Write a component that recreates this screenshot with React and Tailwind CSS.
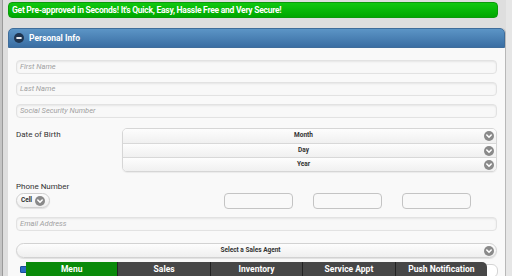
import { useState } from 'react';

function Chevron() {
    return (
        <svg width="10" height="10" viewBox="0 0 10 10" className="shrink-0">
            <circle cx="5" cy="5" r="5" fill="#8a8a8a" />
            <path d="M2.8 4 L5 6.2 L7.2 4" stroke="#fff" strokeWidth="1.6" fill="none" strokeLinecap="round" />
        </svg>
    );
}

function TextInput({ placeholder }) {
    return (
        <div className="h-[14px] rounded-[4px] border border-[#e2e2e2] bg-[#f8f8f8] shadow-[inset_0_1px_2px_rgba(0,0,0,0.08)] flex items-center px-[3px]">
            <span className="text-[7.5px] italic text-[#a0a0a0]">{placeholder}</span>
        </div>
    );
}

export default function App() {
    const [tab, setTab] = useState('Menu');
    const tabs = ['Menu', 'Sales', 'Inventory', 'Service Appt', 'Push Notification'];

    return (
        <div className="w-[512px] h-[276px] overflow-hidden bg-[#dedede] relative font-['Roboto',sans-serif] flex">
            {/* left edge */}
            <div className="w-[3px] bg-[#c4c4c4] border-r border-[#9a9a9a] shrink-0" />

            <div className="flex-1 pl-[5px] pr-[6px] pt-[2px] flex flex-col">
                {/* Banner */}
                <div className="h-[16px] w-[490px] rounded-[4px] bg-gradient-to-b from-[#10c810] to-[#00a800] border border-[#0a9a0a] flex items-center pl-[3px]">
                    <span className="text-[8.5px] font-bold text-white tracking-[-0.25px]">
                        Get Pre-approved in Seconds! It's Quick, Easy, Hassle Free and Very Secure!
                    </span>
                </div>

                {/* Panel */}
                <div className="mt-[10px] flex-1 flex flex-col rounded-t-[5px] border-r border-[#b8b8b8]">
                    <div className="h-[20px] rounded-t-[5px] bg-gradient-to-b from-[#5c95c6] to-[#3a6ea3] border border-[#3f6d9b] flex items-center pl-[5px] gap-[5px]">
                        <svg width="10" height="10" viewBox="0 0 10 10">
                            <circle cx="5" cy="5" r="5" fill="#1f3550" />
                            <rect x="2.4" y="4.1" width="5.2" height="1.8" fill="#fff" />
                        </svg>
                        <span className="text-[8.5px] font-bold text-white">Personal Info</span>
                    </div>

                    <div className="flex-1 bg-[#f9f9f9] pl-[8px] pr-[8px] pt-[12px] flex flex-col">
                        <div className="flex flex-col gap-[8px]">
                            <TextInput placeholder="First Name" />
                            <TextInput placeholder="Last Name" />
                            <TextInput placeholder="Social Security Number" />
                        </div>

                        <div className="mt-[10px] flex">
                            <div className="w-[106px] pt-[1px] text-[8px] text-[#333]">Date of Birth</div>
                            <div className="flex-1 rounded-[5px] border border-[#d6d6d6] overflow-hidden shadow-[0_1px_1px_rgba(0,0,0,0.06)]">
                                {['Month', 'Day', 'Year'].map((label, i) => (
                                    <div
                                        key={label}
                                        className={`h-[14px] bg-gradient-to-b from-[#fdfdfd] to-[#f0f0f0] flex items-center pr-[2px] ${i > 0 ? 'border-t border-[#d8d8d8]' : ''}`}
                                    >
                                        <span className="flex-1 text-center text-[6.5px] font-bold text-[#333]">{label}</span>
                                        <Chevron />
                                    </div>
                                ))}
                            </div>
                        </div>

                        <div className="mt-[10px] text-[8px] text-[#333] leading-[10px]">Phone Number</div>
                        <div className="mt-[1px] flex items-start">
                            <div className="h-[15px] w-[34px] rounded-[8px] border border-[#cfcfcf] bg-gradient-to-b from-[#fdfdfd] to-[#efefef] flex items-center justify-center gap-[3px] shadow-[0_1px_1px_rgba(0,0,0,0.1)]">
                                <span className="text-[6.5px] font-bold text-[#333]">Cell</span>
                                <Chevron />
                            </div>
                            <div className="ml-[174px] flex gap-[20px]">
                                <div className="w-[69px] h-[16px] rounded-[4px] border border-[#c4c4c4] bg-[#f9f9f9]" />
                                <div className="w-[69px] h-[16px] rounded-[4px] border border-[#c4c4c4] bg-[#f9f9f9]" />
                                <div className="w-[69px] h-[16px] rounded-[4px] border border-[#c4c4c4] bg-[#f9f9f9]" />
                            </div>
                        </div>

                        <div className="mt-[8px]">
                            <TextInput placeholder="Email Address" />
                        </div>

                        <div className="mt-[12px] h-[15px] rounded-[8px] border border-[#d2d2d2] bg-gradient-to-b from-[#fdfdfd] to-[#efefef] flex items-center pr-[2px] shadow-[0_1px_1px_rgba(0,0,0,0.1)]">
                            <span className="flex-1 text-center text-[6.5px] font-bold text-[#333]">Select a Sales Agent</span>
                            <Chevron />
                        </div>
                    </div>
                </div>
            </div>

            {/* right edge */}
            <div className="absolute right-0 top-0 bottom-0 w-[6px] bg-[#e6e6e6]" />

            {/* content peeking behind the bar */}
            <div className="absolute left-[20px] top-[266px] w-[7px] h-[7px] rounded-[1px] bg-[#2b6cc4] border border-[#1a4f98]" />
            <div className="absolute left-[480px] top-[264px] w-[18px] h-[14px] rounded-[6px] bg-white border border-[#d4d4d4]" />

            {/* Bottom navigation */}
            <div className="absolute left-[26px] top-[262px] w-[461px] h-[14px] flex rounded-tr-[5px] overflow-hidden">
                {tabs.map((t) => (
                    <button
                        key={t}
                        onClick={() => setTab(t)}
                        className={`flex-1 border-r border-[#222] last:border-r-0 flex items-center justify-center text-[8.5px] font-bold text-white ${tab === t ? 'bg-[#0a8a0a]' : 'bg-[#474747]'}`}
                    >
                        {t}
                    </button>
                ))}
            </div>
        </div>
    );
}
